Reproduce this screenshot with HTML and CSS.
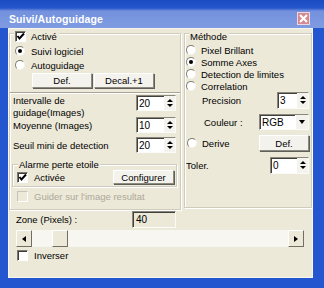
FILE: index.html
```html
<!DOCTYPE html>
<html lang="fr">

<head>
    <meta charset="UTF-8">
    <title>Suivi/Autoguidage</title>
    <link rel="stylesheet" href="styles.css">
</head>

<body>
    <div class="window">
        <div class="titlebar">
            <span class="title">Suivi/Autoguidage</span>
            <span class="close">
                <svg width="9" height="9" viewBox="0 0 9 9"><path d="M1 1 L8 8 M8 1 L1 8" stroke="#fff" stroke-width="2" /></svg>
            </span>
        </div>
        <div class="client">
            <div class="panels">
                <div class="group left">
                    <div class="legend"><span class="check on"><svg width="9" height="9" viewBox="0 0 9 9"><path d="M1.5 4 L3.5 6.5 L8 1.5" fill="none" stroke="#000" stroke-width="2" /></svg></span>Activé</div>
                    <div class="opt first"><span class="radio on"></span>Suivi logiciel</div>
                    <div class="opt"><span class="radio"></span>Autoguidage</div>
                    <div class="btnrow">
                        <span class="btn def">Def.</span>
                        <span class="btn decal">Decal.+1</span>
                    </div>
                    <div class="sep"></div>
                    <div class="field tall">
                        <span class="lbl">Intervalle de<br>guidage(Images)</span>
                        <span class="spin"><span class="val">20</span><span class="arrows"><i class="up"></i><i class="down"></i></span></span>
                    </div>
                    <div class="field">
                        <span class="lbl">Moyenne (Images)</span>
                        <span class="spin"><span class="val">10</span><span class="arrows"><i class="up"></i><i class="down"></i></span></span>
                    </div>
                    <div class="field">
                        <span class="lbl">Seuil mini de detection</span>
                        <span class="spin"><span class="val">20</span><span class="arrows"><i class="up"></i><i class="down"></i></span></span>
                    </div>
                    <div class="group alarm">
                        <div class="legend">Alarme perte etoile</div>
                        <div class="alarm-row">
                            <span class="opt"><span class="check on"><svg width="9" height="9" viewBox="0 0 9 9"><path d="M1.5 4 L3.5 6.5 L8 1.5" fill="none" stroke="#000" stroke-width="2" /></svg></span>Activée</span>
                            <span class="btn conf">Configurer</span>
                        </div>
                    </div>
                    <div class="opt disabled"><span class="check"></span>Guider sur l'image resultat</div>
                </div>

                <div class="group right">
                    <div class="legend">Méthode</div>
                    <div class="opt first"><span class="radio"></span>Pixel Brillant</div>
                    <div class="opt"><span class="radio on"></span>Somme Axes</div>
                    <div class="opt"><span class="radio"></span>Detection de limites</div>
                    <div class="opt"><span class="radio"></span>Correlation</div>
                    <div class="field prec">
                        <span class="lbl">Precision</span>
                        <span class="spin small"><span class="val">3</span><span class="arrows"><i class="up"></i><i class="down"></i></span></span>
                    </div>
                    <div class="field coul">
                        <span class="lbl">Couleur :</span>
                        <span class="combo"><span class="val">RGB</span><span class="drop"><i class="down"></i></span></span>
                    </div>
                    <div class="field derive">
                        <span class="opt"><span class="radio"></span>Derive</span>
                        <span class="btn def2">Def.</span>
                    </div>
                    <div class="field toler">
                        <span class="lbl">Toler.</span>
                        <span class="spin mid"><span class="val">0</span><span class="arrows"><i class="up"></i><i class="down"></i></span></span>
                    </div>
                </div>
            </div>

            <div class="zone">
                <span class="lbl">Zone (Pixels) :</span>
                <span class="edit ro">40</span>
            </div>
            <div class="scrollbar">
                <span class="sbtn"><i class="arr-l"></i></span>
                <span class="track"><span class="thumb"></span></span>
                <span class="sbtn"><i class="arr-r"></i></span>
            </div>
            <div class="opt inv"><span class="check"></span>Inverser</div>
        </div>
    </div>
</body>

</html>
```

FILE: styles.css
```css
* {
    box-sizing: border-box;
}

body {
    margin: 0;
    font-family: "Liberation Sans", Arial, sans-serif;
    font-size: 9.5px;
    color: #000;
}

.window {
    width: 324px;
    height: 288px;
    background: #2456cf;
    display: flex;
    flex-direction: column;
}

.titlebar {
    height: 28px;
    flex: none;
    display: flex;
    align-items: center;
    padding: 9px 14px 0 9px;
    background: linear-gradient(#1d4cc2 0, #2656cc 8px, #7391dd 11px, #7f9ce2 28px);
}

.title {
    flex: 1;
    color: #fff;
    font-weight: bold;
    font-size: 10.5px;
    letter-spacing: 0.1px;
}

.close {
    width: 13px;
    height: 13px;
    display: flex;
    align-items: center;
    justify-content: center;
    background: #d48a92;
    border: 1px solid #f1d6df;
}

.client {
    flex: 1;
    margin: 0 11px 10px 8px;
    background: #ece9d8;
    border: 1px solid #f6f5ef;
    display: flex;
    flex-direction: column;
}

/* group boxes */
.panels {
    display: flex;
    align-items: flex-start;
    gap: 3px;
    margin-top: 4px;
    height: 177px;
}

.group {
    border: 1px solid #cfccbd;
    box-shadow: inset 1px 1px 0 #fff, 1px 1px 0 #fff;
    display: flex;
    flex-direction: column;
}

.legend {
    display: flex;
    align-items: center;
    gap: 5px;
    height: 12px;
    margin: -4px 0 0 4px;
    padding: 0 2px 0 1px;
    background: #ece9d8;
    align-self: flex-start;
}

.left {
    width: 172px;
    height: 177px;
}

.right {
    flex: 1;
    height: 175px;
}

/* checks and radios */
.opt {
    display: flex;
    align-items: center;
    gap: 6px;
    height: 14px;
    padding-left: 5px;
}

.opt.first {
    margin-top: 2px;
}

.right .opt {
    height: 12px;
    padding-left: 1px;
    gap: 5px;
}

.check {
    width: 11px;
    height: 11px;
    flex: none;
    display: flex;
    align-items: center;
    justify-content: center;
    background: #fff;
    border: 1px solid;
    border-color: #7b7a72 #fff #fff #7b7a72;
    box-shadow: inset 1px 1px 0 #3e3d38;
}

.radio {
    width: 10px;
    height: 10px;
    flex: none;
    border-radius: 50%;
    background: #fff;
    border: 1px solid;
    border-color: #807e74 #f4f3ee #f4f3ee #807e74;
    display: flex;
    align-items: center;
    justify-content: center;
}

.radio.on::after {
    content: '';
    width: 4px;
    height: 4px;
    border-radius: 50%;
    background: #000;
}

/* buttons */
.btn {
    display: flex;
    align-items: center;
    justify-content: center;
    height: 15px;
    background: #f3f2ec;
    border: 1px solid;
    border-color: #fff #8d8b80 #8d8b80 #fff;
    box-shadow: 1px 1px 0 #5f5e58;
}

.btnrow {
    display: flex;
    gap: 2px;
    margin: 1px 0 0 22px;
}

.def {
    width: 60px;
}

.decal {
    width: 60px;
}

.sep {
    height: 2px;
    margin: 4px 0 0 0;
    border-top: 1px solid #a8a596;
    border-bottom: 1px solid #fff;
}

/* fields */
.field {
    display: flex;
    align-items: center;
    justify-content: space-between;
    padding: 0 4px 0 3px;
}

.left .field {
    height: 20px;
}

.left .field.tall {
    margin-top: 1px;
    align-items: flex-start;
}

.tall .lbl {
    line-height: 11.5px;
}

.spin,
.combo,
.edit {
    display: flex;
    align-items: center;
    width: 40px;
    height: 16px;
    background: #fff;
    border: 1px solid;
    border-color: #8a887e #fbfbf8 #fbfbf8 #8a887e;
    box-shadow: inset 1px 1px 0 #41403b;
}

.val {
    flex: 1;
    padding-left: 2px;
    font-size: 10px;
}

.arrows {
    width: 11px;
    height: 100%;
    display: flex;
    flex-direction: column;
    align-items: center;
    justify-content: center;
    gap: 2px;
    background: #f4f3ee;
}

.up,
.down {
    width: 0;
    height: 0;
    border-left: 3px solid transparent;
    border-right: 3px solid transparent;
}

.up {
    border-bottom: 3px solid #000;
}

.down {
    border-top: 3px solid #000;
}

.alarm {
    margin: 9px 3px 0 2px;
    height: 23px;
}

.alarm .legend {
    margin: -7px 0 0 5px;
    padding: 0 1px;
}

.alarm-row {
    display: flex;
    align-items: center;
    justify-content: space-between;
    padding-right: 2px;
}

.alarm .opt {
    padding-left: 4px;
}

.conf {
    width: 61px;
    height: 14px;
}

.disabled {
    margin-top: 2px;
    padding-left: 7px;
    color: #aca899;
}

.disabled .check {
    border-color: #c7c5b8 #fff #fff #c7c5b8;
    box-shadow: none;
    background: #ece9d8;
}

/* right panel */
.right .field {
    padding: 0 2px 0 17px;
}

.prec {
    height: 16px;
}

.spin.small {
    width: 32px;
    height: 17px;
}

.coul {
    height: 28px;
    padding-left: 19px !important;
}

.combo {
    width: 50px;
    height: 16px;
}

.drop {
    width: 13px;
    height: 100%;
    display: flex;
    align-items: center;
    justify-content: center;
    background: #f3f2ec;
    border-left: 1px solid #fff;
}

.drop .down {
    border-left-width: 3.5px;
    border-right-width: 3.5px;
    border-top-width: 4px;
}

.derive {
    height: 14px;
    padding-left: 1px !important;
}

.derive .opt {
    padding-left: 1px;
    gap: 5px;
}

.def2 {
    width: 50px;
    height: 16px;
}

.toler {
    height: 30px;
    padding-left: 1px !important;
}

.spin.mid {
    width: 39px;
    height: 17px;
}

/* bottom part */
.zone {
    display: flex;
    align-items: center;
    justify-content: space-between;
    width: 160px;
    margin: 1px 0 0 7px;
}

.edit.ro {
    width: 44px;
    height: 17px;
    background: #ece9d8;
    padding-left: 3px;
    font-size: 10px;
}

.scrollbar {
    display: flex;
    height: 17px;
    margin: 2px 8px 0 7px;
    background: #f7f6f1;
}

.sbtn {
    width: 16px;
    height: 17px;
    display: flex;
    align-items: center;
    justify-content: center;
    background: #ece9d8;
    border: 1px solid;
    border-color: #fff #716f64 #716f64 #fff;
}

.track {
    flex: 1;
    display: flex;
    padding-left: 20px;
}

.thumb {
    width: 16px;
    height: 17px;
    background: #ece9d8;
    border: 1px solid;
    border-color: #fff #716f64 #716f64 #fff;
}

.arr-l,
.arr-r {
    width: 0;
    height: 0;
    border-top: 3.5px solid transparent;
    border-bottom: 3.5px solid transparent;
}

.arr-l {
    border-right: 4px solid #000;
}

.arr-r {
    border-left: 4px solid #000;
}

.inv {
    margin-top: 1px;
    padding-left: 8px;
}
```
